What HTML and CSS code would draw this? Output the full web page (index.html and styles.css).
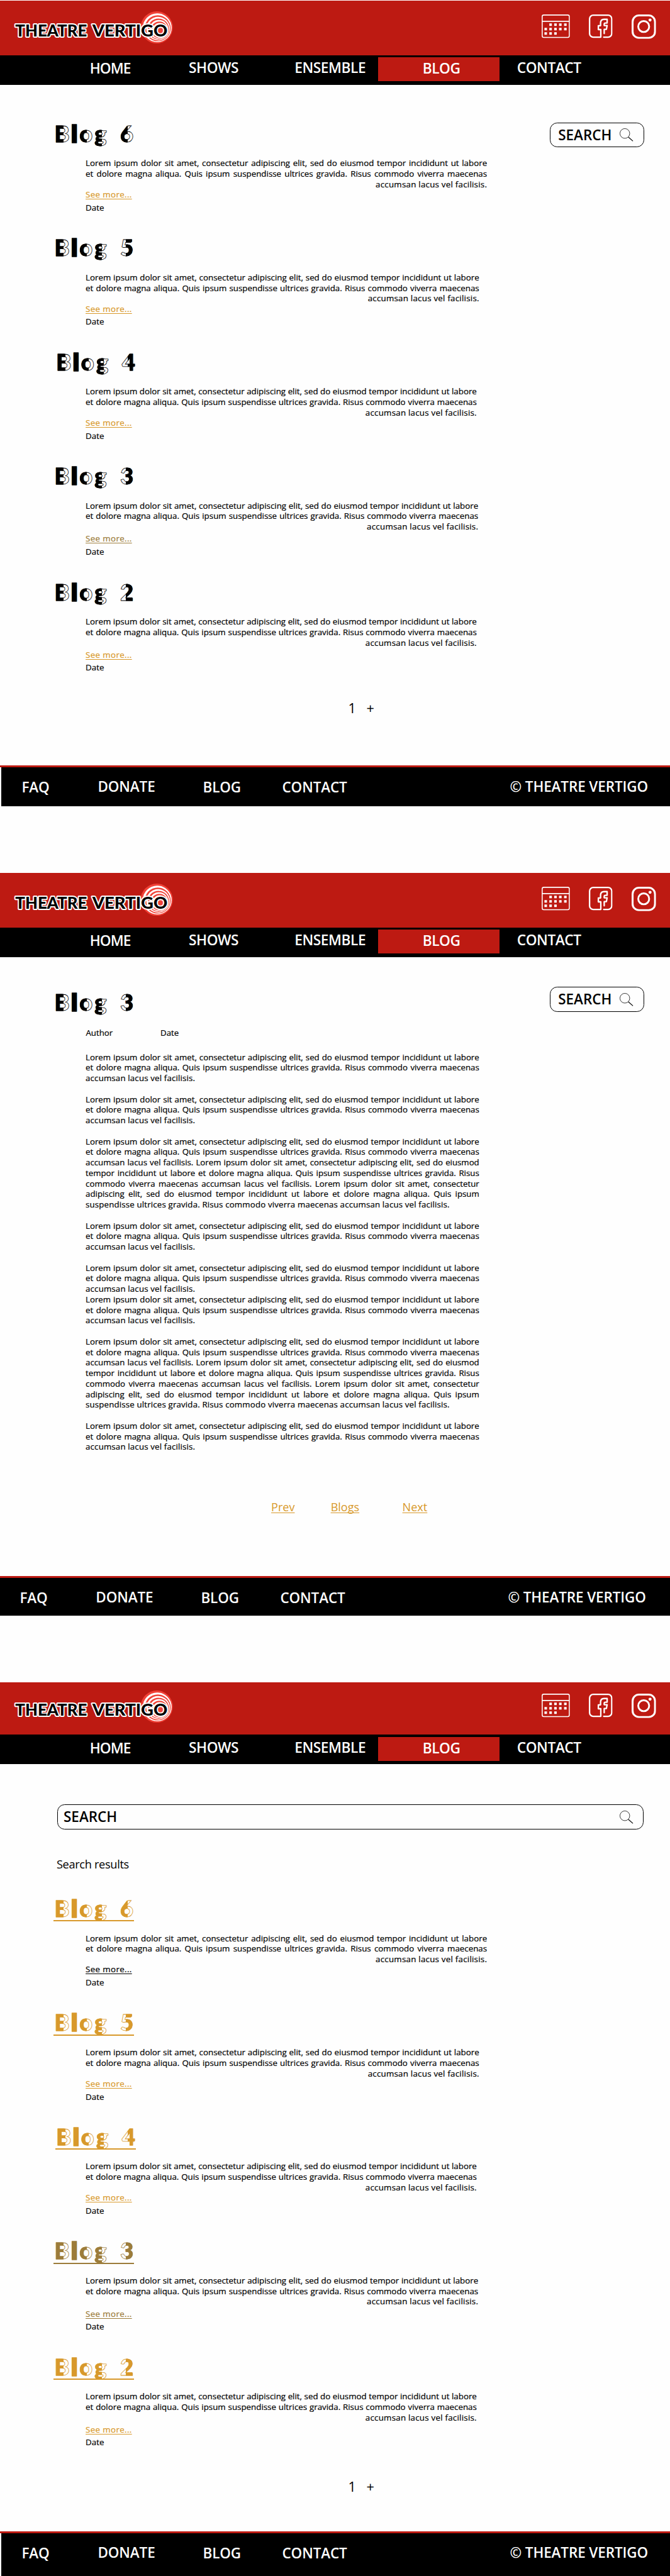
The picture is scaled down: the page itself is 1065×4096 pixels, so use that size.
FILE: index.html
```
<!DOCTYPE html>
<html lang="en">
<head>
<meta charset="utf-8">
<title>Theatre Vertigo – Blog</title>
<link rel="stylesheet" href="styles.css">
</head>
<body>
<svg class="defs" aria-hidden="true">
  <symbol id="i-cal" viewBox="0 0 58 50">
    <rect x="1.1" y="1.1" width="55.6" height="46" rx="3.2" fill="none" stroke="#fff" stroke-width="2"/>
    <path d="M1 14H57" stroke="#fff" stroke-width="2.2"/>
    <path d="M15.7 21h5.2M25.7 21h5.2M35.7 21h5.2M46 21h5.2M5.7 30h5.2M15.7 30h5.2M25.7 30h5.2M35.7 30h5.2M46 30h5.2M5.7 39h5.2M15.7 39h5.2M25.7 39h5.2" stroke="#fff" stroke-width="5.4"/>
  </symbol>
  <symbol id="i-fb" viewBox="0 0 48.5 50">
    <path d="M30.5 46.5H39.5a7.5 7.5 0 0 0 7.5-7.5V9a7.5 7.5 0 0 0-7.5-7.5H9A7.5 7.5 0 0 0 1.5 9V39a7.5 7.5 0 0 0 7.5 7.5H24.5V31H19.5V23H24V18C24 12.5 27 10 31 10H37.5V17.5H34C32 17.5 31.5 18.5 31.5 20V22.7H37.5L36 30.5H31.5V39" fill="none" stroke="#fff" stroke-width="3" stroke-linejoin="round" stroke-linecap="round"/>
  </symbol>
  <symbol id="i-ig" viewBox="0 0 50 50">
    <rect x="2" y="2" width="46" height="46" rx="13" fill="none" stroke="#fff" stroke-width="4"/>
    <circle cx="24.8" cy="24.8" r="11.2" fill="none" stroke="#fff" stroke-width="3.8"/>
    <circle cx="37.8" cy="11.4" r="3.1" fill="#fff"/>
  </symbol>
  <symbol id="i-mag" viewBox="0 0 28 27">
    <circle cx="10.6" cy="10.6" r="10" fill="none" stroke="#000" stroke-width="1"/>
    <path d="M17.8 18L27.3 26.3" stroke="#000" stroke-width="1.5"/>
  </symbol>
  <symbol id="i-rings" viewBox="0 0 68 68">
    <circle cx="34" cy="34" r="33" fill="#f04136"/>
    <circle cx="35" cy="34.8" r="29.6" fill="#fff"/>
    <circle cx="36" cy="35.8" r="26.6" fill="#f04136"/>
    <circle cx="36.8" cy="36.6" r="24.2" fill="#fff"/>
    <circle cx="37.6" cy="37.4" r="21.6" fill="#f04136"/>
    <circle cx="38.4" cy="38.2" r="19.4" fill="#fff"/>
    <circle cx="39.2" cy="39" r="17" fill="#f04136"/>
    <circle cx="40" cy="39.8" r="14.8" fill="#fff"/>
    <circle cx="40.8" cy="40.6" r="12.6" fill="#f04136"/>
  </symbol>
</svg>

<section class="screen screen-list">
  <header class="topbar">
    <svg class="logo" viewBox="28 20 332 72"><use href="#i-rings" x="287" y="21.5" width="68" height="68"/><text x="31" y="74" textLength="147" lengthAdjust="spacingAndGlyphs">THEATRE</text><text x="189" y="74" textLength="154" lengthAdjust="spacingAndGlyphs">VERTIGO</text></svg>
    <div class="social"><svg class="cal"><use href="#i-cal"/></svg><svg class="fb"><use href="#i-fb"/></svg><svg class="ig"><use href="#i-ig"/></svg></div>
  </header>
  <nav class="nav"><a class="home">HOME</a><a>SHOWS</a><a>ENSEMBLE</a><a class="active">BLOG</a><a class="contact">CONTACT</a></nav>
  <main class="main">
    <div class="posts">
      <article class="post w6">
        <h2 class="title"><span class="bl">B</span><span class="sl">l</span><span class="ol">o</span><span class="ol">g</span> <span class="ol">6</span></h2>
        <p class="excerpt"><span>Lorem ipsum dolor sit amet, consectetur adipiscing elit, sed do eiusmod tempor incididunt ut labore</span> <span>et dolore magna aliqua. Quis ipsum suspendisse ultrices gravida. Risus commodo viverra maecenas</span> <span class="end">accumsan lacus vel facilisis.</span></p>
        <p class="more"><a>See more...</a></p><p class="date">Date</p>
      </article>
      <article class="post w5">
        <h2 class="title"><span class="bl">B</span><span class="sl">l</span><span class="ol">o</span><span class="ol">g</span> <span class="or">5</span></h2>
        <p class="excerpt"><span>Lorem ipsum dolor sit amet, consectetur adipiscing elit, sed do eiusmod tempor incididunt ut labore</span> <span>et dolore magna aliqua. Quis ipsum suspendisse ultrices gravida. Risus commodo viverra maecenas</span> <span class="end">accumsan lacus vel facilisis.</span></p>
        <p class="more"><a>See more...</a></p><p class="date">Date</p>
      </article>
      <article class="post w4">
        <h2 class="title"><span class="bl">B</span><span class="sl">l</span><span class="ol">o</span><span class="ol">g</span> <span class="or">4</span></h2>
        <p class="excerpt"><span>Lorem ipsum dolor sit amet, consectetur adipiscing elit, sed do eiusmod tempor incididunt ut labore</span> <span>et dolore magna aliqua. Quis ipsum suspendisse ultrices gravida. Risus commodo viverra maecenas</span> <span class="end">accumsan lacus vel facilisis.</span></p>
        <p class="more"><a>See more...</a></p><p class="date">Date</p>
      </article>
      <article class="post w3 loose visited-more">
        <h2 class="title"><span class="bl">B</span><span class="sl">l</span><span class="ol">o</span><span class="ol">g</span> <span class="or">3</span></h2>
        <p class="excerpt"><span>Lorem ipsum dolor sit amet, consectetur adipiscing elit, sed do eiusmod tempor incididunt ut labore</span> <span>et dolore magna aliqua. Quis ipsum suspendisse ultrices gravida. Risus commodo viverra maecenas</span> <span class="end">accumsan lacus vel facilisis.</span></p>
        <p class="more"><a>See more...</a></p><p class="date">Date</p>
      </article>
      <article class="post w4 loose last">
        <h2 class="title"><span class="bl">B</span><span class="sl">l</span><span class="ol">o</span><span class="ol">g</span> <span class="or">2</span></h2>
        <p class="excerpt"><span>Lorem ipsum dolor sit amet, consectetur adipiscing elit, sed do eiusmod tempor incididunt ut labore</span> <span>et dolore magna aliqua. Quis ipsum suspendisse ultrices gravida. Risus commodo viverra maecenas</span> <span class="end">accumsan lacus vel facilisis.</span></p>
        <p class="more"><a>See more...</a></p><p class="date">Date</p>
      </article>
      <div class="pager"><span>1</span><span>+</span></div>
    </div>
    <div class="search"><span>SEARCH</span><svg><use href="#i-mag"/></svg></div>
  </main>
  <footer class="footer"><div class="bar"><a>FAQ</a><a class="up">DONATE</a><a>BLOG</a><a>CONTACT</a><span class="up">© THEATRE VERTIGO</span></div></footer>
</section>

<section class="screen screen-article">
  <header class="topbar">
    <svg class="logo" viewBox="28 20 332 72"><use href="#i-rings" x="287" y="21.5" width="68" height="68"/><text x="31" y="74" textLength="147" lengthAdjust="spacingAndGlyphs">THEATRE</text><text x="189" y="74" textLength="154" lengthAdjust="spacingAndGlyphs">VERTIGO</text></svg>
    <div class="social"><svg class="cal"><use href="#i-cal"/></svg><svg class="fb"><use href="#i-fb"/></svg><svg class="ig"><use href="#i-ig"/></svg></div>
  </header>
  <nav class="nav"><a class="home">HOME</a><a>SHOWS</a><a>ENSEMBLE</a><a class="active">BLOG</a><a class="contact">CONTACT</a></nav>
  <main class="main">
    <article class="entry">
      <h2 class="title"><span class="bl">B</span><span class="sl">l</span><span class="ol">o</span><span class="ol">g</span> <span class="or">3</span></h2>
      <div class="byline"><span>Author</span><span>Date</span></div>
      <div class="body">
        <p><span>Lorem ipsum dolor sit amet, consectetur adipiscing elit, sed do eiusmod tempor incididunt ut labore</span> <span>et dolore magna aliqua. Quis ipsum suspendisse ultrices gravida. Risus commodo viverra maecenas</span> <span class="fin">accumsan lacus vel facilisis.</span></p>
        <p><span>Lorem ipsum dolor sit amet, consectetur adipiscing elit, sed do eiusmod tempor incididunt ut labore</span> <span>et dolore magna aliqua. Quis ipsum suspendisse ultrices gravida. Risus commodo viverra maecenas</span> <span class="fin">accumsan lacus vel facilisis.</span></p>
        <p><span>Lorem ipsum dolor sit amet, consectetur adipiscing elit, sed do eiusmod tempor incididunt ut labore</span> <span>et dolore magna aliqua. Quis ipsum suspendisse ultrices gravida. Risus commodo viverra maecenas</span> <span>accumsan lacus vel facilisis. Lorem ipsum dolor sit amet, consectetur adipiscing elit, sed do eiusmod</span> <span>tempor incididunt ut labore et dolore magna aliqua. Quis ipsum suspendisse ultrices gravida. Risus</span> <span>commodo viverra maecenas accumsan lacus vel facilisis. Lorem ipsum dolor sit amet, consectetur</span> <span>adipiscing elit, sed do eiusmod tempor incididunt ut labore et dolore magna aliqua. Quis ipsum</span> <span class="fin">suspendisse ultrices gravida. Risus commodo viverra maecenas accumsan lacus vel facilisis.</span></p>
        <p><span>Lorem ipsum dolor sit amet, consectetur adipiscing elit, sed do eiusmod tempor incididunt ut labore</span> <span>et dolore magna aliqua. Quis ipsum suspendisse ultrices gravida. Risus commodo viverra maecenas</span> <span class="fin">accumsan lacus vel facilisis.</span></p>
        <p class="tight"><span>Lorem ipsum dolor sit amet, consectetur adipiscing elit, sed do eiusmod tempor incididunt ut labore</span> <span>et dolore magna aliqua. Quis ipsum suspendisse ultrices gravida. Risus commodo viverra maecenas</span> <span class="fin">accumsan lacus vel facilisis.</span></p>
        <p><span>Lorem ipsum dolor sit amet, consectetur adipiscing elit, sed do eiusmod tempor incididunt ut labore</span> <span>et dolore magna aliqua. Quis ipsum suspendisse ultrices gravida. Risus commodo viverra maecenas</span> <span class="fin">accumsan lacus vel facilisis.</span></p>
        <p><span>Lorem ipsum dolor sit amet, consectetur adipiscing elit, sed do eiusmod tempor incididunt ut labore</span> <span>et dolore magna aliqua. Quis ipsum suspendisse ultrices gravida. Risus commodo viverra maecenas</span> <span>accumsan lacus vel facilisis. Lorem ipsum dolor sit amet, consectetur adipiscing elit, sed do eiusmod</span> <span>tempor incididunt ut labore et dolore magna aliqua. Quis ipsum suspendisse ultrices gravida. Risus</span> <span>commodo viverra maecenas accumsan lacus vel facilisis. Lorem ipsum dolor sit amet, consectetur</span> <span>adipiscing elit, sed do eiusmod tempor incididunt ut labore et dolore magna aliqua. Quis ipsum</span> <span class="fin">suspendisse ultrices gravida. Risus commodo viverra maecenas accumsan lacus vel facilisis.</span></p>
        <p><span>Lorem ipsum dolor sit amet, consectetur adipiscing elit, sed do eiusmod tempor incididunt ut labore</span> <span>et dolore magna aliqua. Quis ipsum suspendisse ultrices gravida. Risus commodo viverra maecenas</span> <span class="fin">accumsan lacus vel facilisis.</span></p>
      </div>
      <div class="steps"><a>Prev</a><a>Blogs</a><a>Next</a></div>
    </article>
    <div class="search"><span>SEARCH</span><svg><use href="#i-mag"/></svg></div>
  </main>
  <footer class="footer"><div class="bar"><a>FAQ</a><a class="up">DONATE</a><a>BLOG</a><a>CONTACT</a><span class="up">© THEATRE VERTIGO</span></div></footer>
</section>

<section class="screen screen-results">
  <header class="topbar">
    <svg class="logo" viewBox="28 20 332 72"><use href="#i-rings" x="287" y="21.5" width="68" height="68"/><text x="31" y="74" textLength="147" lengthAdjust="spacingAndGlyphs">THEATRE</text><text x="189" y="74" textLength="154" lengthAdjust="spacingAndGlyphs">VERTIGO</text></svg>
    <div class="social"><svg class="cal"><use href="#i-cal"/></svg><svg class="fb"><use href="#i-fb"/></svg><svg class="ig"><use href="#i-ig"/></svg></div>
  </header>
  <nav class="nav"><a class="home">HOME</a><a>SHOWS</a><a>ENSEMBLE</a><a class="active">BLOG</a><a class="contact">CONTACT</a></nav>
  <main class="main">
    <div class="search wide"><span>SEARCH</span><svg><use href="#i-mag"/></svg></div>
    <p class="results">Search results</p>
    <div class="posts">
      <article class="post w6 fresh">
        <h2 class="title"><a><span class="bl">B</span><span class="sl">l</span><span class="ol">o</span><span class="ol">g</span> <span class="ol">6</span></a></h2>
        <p class="excerpt"><span>Lorem ipsum dolor sit amet, consectetur adipiscing elit, sed do eiusmod tempor incididunt ut labore</span> <span>et dolore magna aliqua. Quis ipsum suspendisse ultrices gravida. Risus commodo viverra maecenas</span> <span class="end">accumsan lacus vel facilisis.</span></p>
        <p class="more"><a>See more...</a></p><p class="date">Date</p>
      </article>
      <article class="post w5">
        <h2 class="title"><a><span class="bl">B</span><span class="sl">l</span><span class="ol">o</span><span class="ol">g</span> <span class="or">5</span></a></h2>
        <p class="excerpt"><span>Lorem ipsum dolor sit amet, consectetur adipiscing elit, sed do eiusmod tempor incididunt ut labore</span> <span>et dolore magna aliqua. Quis ipsum suspendisse ultrices gravida. Risus commodo viverra maecenas</span> <span class="end">accumsan lacus vel facilisis.</span></p>
        <p class="more"><a>See more...</a></p><p class="date">Date</p>
      </article>
      <article class="post w4">
        <h2 class="title"><a><span class="bl">B</span><span class="sl">l</span><span class="ol">o</span><span class="ol">g</span> <span class="or">4</span></a></h2>
        <p class="excerpt"><span>Lorem ipsum dolor sit amet, consectetur adipiscing elit, sed do eiusmod tempor incididunt ut labore</span> <span>et dolore magna aliqua. Quis ipsum suspendisse ultrices gravida. Risus commodo viverra maecenas</span> <span class="end">accumsan lacus vel facilisis.</span></p>
        <p class="more"><a>See more...</a></p><p class="date">Date</p>
      </article>
      <article class="post w3 loose visited-more">
        <h2 class="title"><a><span class="bl">B</span><span class="sl">l</span><span class="ol">o</span><span class="ol">g</span> <span class="or">3</span></a></h2>
        <p class="excerpt"><span>Lorem ipsum dolor sit amet, consectetur adipiscing elit, sed do eiusmod tempor incididunt ut labore</span> <span>et dolore magna aliqua. Quis ipsum suspendisse ultrices gravida. Risus commodo viverra maecenas</span> <span class="end">accumsan lacus vel facilisis.</span></p>
        <p class="more"><a>See more...</a></p><p class="date">Date</p>
      </article>
      <article class="post w4 loose last">
        <h2 class="title"><a><span class="bl">B</span><span class="sl">l</span><span class="ol">o</span><span class="ol">g</span> <span class="or">2</span></a></h2>
        <p class="excerpt"><span>Lorem ipsum dolor sit amet, consectetur adipiscing elit, sed do eiusmod tempor incididunt ut labore</span> <span>et dolore magna aliqua. Quis ipsum suspendisse ultrices gravida. Risus commodo viverra maecenas</span> <span class="end">accumsan lacus vel facilisis.</span></p>
        <p class="more"><a>See more...</a></p><p class="date">Date</p>
      </article>
      <div class="pager"><span>1</span><span>+</span></div>
    </div>
  </main>
  <footer class="footer"><div class="bar"><a>FAQ</a><a class="up">DONATE</a><a>BLOG</a><a>CONTACT</a><span class="up">© THEATRE VERTIGO</span></div></footer>
</section>
</body>
</html>
```
FILE: styles.css
```
:root {
  --red: #bd1a12;
  --gold: #d8992b;
  --bronze: #9c7c3a;
  font-size: 7.753px;
}
* { box-sizing: border-box; }
body, h2, p { margin: 0; }
body {
  background: #fefefe;
  color: #000;
  font-family: "Open Sans", "Noto Sans", sans-serif;
  overflow-x: hidden;
}
.defs { display: block; width: 0; height: 0; }

.screen { display: flex; flex-direction: column; }
.screen-list { height: 178.9rem; padding-top: 0.1rem; }
.screen-article { height: 165.5rem; padding-top: 0.1rem; }
.screen-results { height: 183.9rem; padding-top: 0.6rem; }

/* Header */
.topbar {
  flex: none;
  display: flex;
  justify-content: space-between;
  align-items: flex-end;
  height: 11.3rem;
  padding: 0 2.9rem 0 2.8rem;
  background: var(--red);
}
.screen-results .topbar { height: 10.8rem; }
.logo { width: 33.2rem; height: 7.2rem; margin-bottom: 2.2rem; overflow: visible; }
.logo text {
  font: 900 35px Lato, sans-serif;
  fill: #000;
  stroke: #fff;
  stroke-width: 5px;
  stroke-linejoin: round;
  paint-order: stroke;
}
.social { display: flex; margin-bottom: 3.4rem; }
.social svg { display: block; height: 5rem; }
.cal { width: 5.8rem; }
.fb { width: 4.85rem; margin-left: 3.85rem; }
.ig { width: 5rem; margin-left: 3.9rem; }

.nav {
  flex: none;
  display: grid;
  grid-template-columns: 20.3rem 21.7rem 17.2rem 24.9rem auto;
  height: 6rem;
  padding-left: 18.4rem;
  background: #000;
  color: #fff;
  font-size: 2.93rem;
  font-weight: 600;
  line-height: 4.5rem;
  letter-spacing: -0.02em;
}
.nav a { padding-top: 0.4rem; }
.nav .home { line-height: 4.7rem; letter-spacing: -0.04em; }
.nav .active {
  height: 4.9rem;
  margin: 0.4rem 0.1rem 0 -0.1rem;
  padding-top: 0;
  line-height: 4.7rem;
  text-align: center;
  background: var(--red);
  padding-left: 1.1rem;
}
.nav .contact { padding-left: 3.5rem; }

/* Content */
.main { flex: 1; display: flex; align-items: flex-start; }
.screen-list .main { padding-top: 7.48rem; }
.screen-article .main { padding-top: 6.1rem; }
.screen-results .main { display: block; padding-top: 8.3rem; }
.posts, .entry { width: 101.7rem; margin-left: 11rem; }

.search {
  display: flex;
  justify-content: space-between;
  width: 19.4rem;
  height: 5.1rem;
  padding: 0 2.1rem 0 1.6rem;
  border: 1px solid #000;
  border-radius: 1.5rem;
  font-size: 2.9rem;
  font-weight: 600;
  line-height: 4.9rem;
}
.search svg { width: 2.8rem; height: 2.7rem; margin-top: 1.1rem; }
.screen-list .search { margin-top: 0.22rem; }
.search.wide { width: 120.2rem; margin-left: 11.7rem; padding: 0 1.95rem 0 1.2rem; }
.results {
  margin: 5.7rem 0 5rem 11.6rem;
  font-size: 2.35rem;
  line-height: 3rem;
  letter-spacing: -0.018em;
}

.title {
  height: 5rem;
  padding-left: 0.15rem;
  font: 900 4.7rem/5rem Lato, sans-serif;
  letter-spacing: 0.09em;
  word-spacing: 0.17em;
  white-space: nowrap;
  --ink: #000;
}
/* Deco lettering: each letter solid on one side, outlined on the other */
.title span {
  color: transparent;
  -webkit-text-stroke: 0.8px var(--ink);
  -webkit-background-clip: text;
  background-clip: text;
}
.title .bl { background-image: linear-gradient(90deg, var(--ink) 54%, transparent 54%); }
.title .ol { background-image: linear-gradient(90deg, var(--ink) 52%, transparent 52%); }
.title .or { background-image: linear-gradient(90deg, transparent 36%, var(--ink) 36%); }
.title .sl { background-image: linear-gradient(var(--ink), var(--ink)); -webkit-text-stroke-width: 3px; }
.screen-results .title { padding-left: 0; --ink: var(--gold); }
.title a {
  display: inline-block;
  width: 16.5rem;
  height: 5.2rem;
  padding-left: 0.15rem;
  border-bottom: 2px solid var(--ink);
}
.screen-results .visited-more .title { --ink: var(--bronze); }

.post { height: 23.4rem; }
.post.loose { height: 23.8rem; }
.post.last { height: 23.4rem; }
.excerpt, .more, .date {
  margin-left: 6.55rem;
  font-size: 1.72rem;
  line-height: 2.17rem;
}
.excerpt, .more, .date, .body, .byline { -webkit-text-stroke: 0.22px; }
.excerpt { margin-top: 2.55rem; }
.excerpt span, .body span {
  display: block;
  text-align: justify;
  text-align-last: justify;
  white-space: nowrap;
}
.excerpt .end { text-align-last: right; letter-spacing: 0.018em; }
.body .fin { text-align-last: left; letter-spacing: 0.013em; }
.w6 .excerpt { width: 82.3rem; }
.w5 .excerpt { width: 80.7rem; }
.w4 .excerpt { width: 80.2rem; }
.w3 .excerpt { width: 80.5rem; }
.w4:not(.last) .title { margin-left: 0.35rem; }

a { color: inherit; }
.more { margin-top: -0.1rem; color: var(--gold); letter-spacing: 0.028em; }
.more a, .steps a { text-decoration: underline; text-decoration-thickness: 1px; text-underline-offset: 0.3rem; text-decoration-skip-ink: none; }
.loose .more { margin-top: 0.3rem; }
.visited-more .more { color: var(--bronze); }
.fresh .more { color: #000; }
.date { margin-top: 0.52rem; }
.loose .date { margin-top: 0.45rem; }

.pager {
  display: flex;
  margin: 0.92rem 0 0 60.4rem;
  font-size: 2.8rem;
  line-height: 4rem;
}
.pager span { width: 3.75rem; }
.screen-results .pager { margin-top: 1.62rem; }

/* Article */
.entry { padding-top: 0.58rem; }
.byline {
  display: grid;
  grid-template-columns: 15.3rem auto;
  margin: 2.85rem 0 0 6.6rem;
  font-size: 1.71rem;
  line-height: 2.16rem;
}
.body { width: 80.7rem; margin: 2.77rem 0 0 6.55rem; font-size: 1.71rem; line-height: 2.16rem; }
.body p + p { margin-top: 2.16rem; }
.body p.tight + p { margin-top: 0; }
.steps {
  display: grid;
  grid-template-columns: 12.2rem 14.7rem auto;
  margin: 9.75rem 0 0 44.6rem;
  color: var(--gold);
  font-size: 2.33rem;
  line-height: 3rem;
}

/* Footer */
.footer { flex: none; border-top: 0.5rem solid var(--red); }
.screen-list .footer { margin-bottom: 13.6rem; }
.screen-article .footer { margin-bottom: 13rem; }
.bar {
  display: grid;
  grid-template-columns: 15.6rem 21.55rem 16.25rem 46.7rem auto;
  height: 8rem;
  margin-left: 0.2rem;
  padding-left: 4.25rem;
  background: #000;
  color: #fff;
  font-size: 2.9rem;
  font-weight: 600;
  line-height: 8.2rem;
  letter-spacing: -0.005em;
  white-space: nowrap;
}
.bar .up { line-height: 8rem; }
.screen-article .bar { height: 7.8rem; margin-left: 0; padding-left: 4.05rem; }
.screen-results .bar { height: 8.8rem; }
```
